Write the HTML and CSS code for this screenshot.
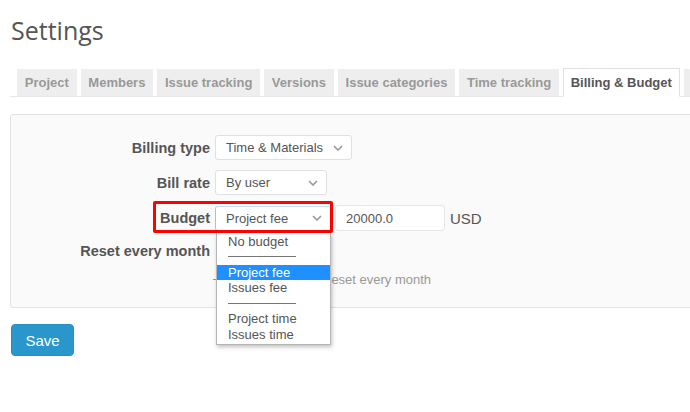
FILE: index.html
```html
<!DOCTYPE html>
<html lang="en">
<head>
    <meta charset="UTF-8">
    <meta name="viewport" content="width=device-width, initial-scale=1.0">
    <title>Settings</title>
    <link rel="stylesheet" href="styles.css">
</head>
<body>
    <div class="page">
        <h2 class="page-title">Settings</h2>

        <ul class="tabs">
            <li class="tab">Project</li>
            <li class="tab">Members</li>
            <li class="tab">Issue tracking</li>
            <li class="tab">Versions</li>
            <li class="tab">Issue categories</li>
            <li class="tab">Time tracking</li>
            <li class="tab tab-active">Billing &amp; Budget</li>
            <li class="tab">Wiki</li>
        </ul>

        <div class="settings-box">
            <div class="form-row">
                <label class="form-label">Billing type</label>
                <div class="select select-wide">
                    <span>Time &amp; Materials</span>
                    <svg class="chevron" viewBox="0 0 10 6"><path d="M1 1l4 4 4-4"/></svg>
                </div>
            </div>
            <div class="form-row">
                <label class="form-label">Bill rate</label>
                <div class="select">
                    <span>By user</span>
                    <svg class="chevron" viewBox="0 0 10 6"><path d="M1 1l4 4 4-4"/></svg>
                </div>
            </div>
            <div class="form-row form-row-budget">
                <span class="highlight-box"></span>
                <label class="form-label">Budget</label>
                <div class="select select-budget select-focus">
                    <span>Project fee</span>
                    <svg class="chevron" viewBox="0 0 10 6"><path d="M1 1l4 4 4-4"/></svg>
                    <ul class="dropdown">
                        <li class="option">No budget</li>
                        <li class="option option-sep"><span></span></li>
                        <li class="option option-selected">Project fee</li>
                        <li class="option">Issues fee</li>
                        <li class="option option-sep"><span></span></li>
                        <li class="option">Project time</li>
                        <li class="option">Issues time</li>
                    </ul>
                </div>
                <input type="text" class="text-field" value="20000.0">
                <span class="currency">USD</span>
            </div>
            <div class="form-row form-row-short">
                <label class="form-label">Reset every month</label>
                <input type="checkbox" class="check">
            </div>
            <div class="form-row form-row-hint">
                <span class="form-label"></span>
                <span class="hint-dash"></span>
                <span class="hint">Reset every month</span>
            </div>
        </div>

        <button class="save-btn">Save</button>
    </div>
</body>
</html>
```

FILE: styles.css
```css
body {
    margin: 0;
    overflow: hidden;
    background: #fff;
    font-family: "Liberation Sans", Arial, sans-serif;
    color: #555;
}
.page {
    width: 720px;
    padding-left: 10px;
}
.page-title {
    margin: 13px 0 0 1px;
    font-family: "Open Sans", sans-serif;
    font-size: 25px;
    font-weight: normal;
    line-height: 34px;
    color: #555;
}
.tabs {
    display: flex;
    gap: 4px;
    margin: 22px 0 0;
    padding: 0 0 0 7px;
    list-style: none;
    border-bottom: 1px solid #e6e6e6;
}
.tab {
    padding: 0 7.75px;
    height: 27px;
    line-height: 27px;
    background: #eee;
    color: #999;
    font-size: 13px;
    font-weight: bold;
    white-space: nowrap;
}
.tab-active {
    background: #fff;
    color: #555;
    border: 1px solid #e0e0e0;
    border-bottom-color: #fff;
    margin-top: -1px;
    margin-bottom: -1px;
    padding: 0 6.75px;
}
.settings-box {
    margin-top: 17px;
    padding: 20px 0 20px;
    background: #fafafa;
    border: 1px solid #e2e2e2;
    border-radius: 3px;
}
.form-row {
    display: flex;
    align-items: center;
    gap: 5px;
    margin-bottom: 10px;
    position: relative;
}
.form-row-short {
    height: 20px;
}
.form-row-hint {
    margin-bottom: 0;
    height: 16px;
}
.form-label {
    width: 199px;
    flex: none;
    text-align: right;
    font-size: 14.5px;
    font-weight: bold;
    color: #555;
}
.select {
    position: relative;
    display: flex;
    align-items: center;
    justify-content: space-between;
    box-sizing: border-box;
    width: 112px;
    height: 25px;
    padding: 0 8px 0 10px;
    background: #fff;
    border: 1px solid #e0e0e0;
    border-radius: 3px;
    font-size: 13px;
    color: #555;
}
.select-wide {
    width: 137px;
}
.select-budget {
    width: 116px;
}
.select-focus {
    border-left-color: #9fc3e6;
    border-top-color: #c5dbef;
}
.chevron {
    width: 10px;
    height: 6px;
    fill: none;
    stroke: #999;
    stroke-width: 1.6;
}
.text-field {
    box-sizing: border-box;
    width: 110px;
    height: 26px;
    margin-left: -1px;
    padding: 0 10px;
    border: 1px solid #e6e6e6;
    border-radius: 3px;
    font-family: "Liberation Sans", Arial, sans-serif;
    font-size: 13px;
    color: #555;
}
.currency {
    font-size: 15px;
    color: #555;
}
.highlight-box {
    position: absolute;
    left: 142px;
    top: -4px;
    width: 180px;
    height: 32px;
    box-sizing: border-box;
    border: 3px solid #f00;
    border-radius: 2px;
    z-index: 1;
}
.check {
    margin: 0 0 0 6px;
    width: 13px;
    height: 13px;
}
.hint-dash {
    width: 6px;
    border-top: 1px solid #999;
    margin-left: -2px;
}
.hint {
    font-size: 13px;
    color: #999;
    white-space: nowrap;
    margin-left: 98px;
}
.dropdown {
    position: absolute;
    top: 26px;
    left: 0;
    width: 113px;
    margin: 0;
    padding: 1px 0 2px;
    list-style: none;
    background: #fff;
    border: 1px solid #b5b5b5;
    border-top: none;
    box-shadow: 1px 2px 4px rgba(0, 0, 0, 0.25);
    z-index: 2;
}
.option {
    height: 15.5px;
    line-height: 15.5px;
    padding-left: 11px;
    font-size: 13px;
    color: #555;
}
.option-sep {
    display: flex;
    align-items: center;
}
.option-sep span {
    width: 68px;
    border-top: 1px solid #777;
}
.option-selected {
    background: #1e90ff;
    color: #fff;
}
.save-btn {
    display: block;
    margin: 16px 0 0 1px;
    width: 63px;
    height: 32px;
    padding: 0;
    background: #2a97cc;
    border: 1px solid #2690c4;
    border-radius: 4px;
    color: #fff;
    font-family: "Liberation Sans", Arial, sans-serif;
    font-size: 15px;
}
```
